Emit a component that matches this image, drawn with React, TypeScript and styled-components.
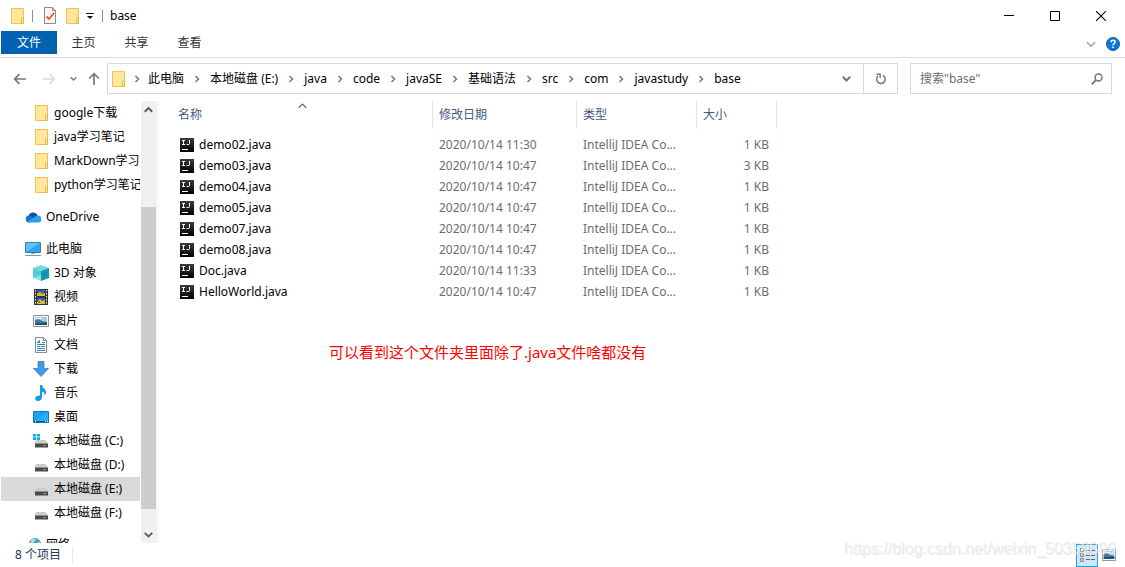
import React from 'react';
import styled, { createGlobalStyle } from 'styled-components';

const GlobalStyle = createGlobalStyle`
  * { box-sizing: border-box; }
  body {
    margin: 0;
    background: #fff;
    color: #000;
    font: 12px/16px "Noto Sans", "Noto Sans CJK SC", sans-serif;
  }
  button, input { font: inherit; color: inherit; }
  button { border: 0; padding: 0; background: none; }
  a { color: inherit; text-decoration: none; }
  svg { display: block; flex: none; }
  ul, ol { list-style: none; margin: 0; padding: 0; }
`;

const Window = styled.div`
  position: relative;
  display: flex;
  flex-direction: column;
  height: 100vh;
  overflow: hidden;
`;

const TitleBar = styled.header`
  display: flex;
  align-items: center;
  height: 31px;
  padding-left: 10px;
`;

const QuickButton = styled.button<{ $width: number }>`
  display: flex;
  align-items: center;
  justify-content: center;
  width: ${(p) => p.$width}px;
  height: 22px;
`;

const Separator = styled.span<{ $space: number }>`
  width: 1px;
  height: 12px;
  margin: 0 ${(p) => p.$space}px;
  background: #8f8f8f;
`;

const Title = styled.h1`
  flex: 1;
  margin: 0;
  font-size: 12px;
  font-weight: 400;
`;

const CaptionButtons = styled.div`
  display: flex;
  padding-right: 1px;
`;

const CaptionButton = styled.button`
  display: flex;
  align-items: center;
  justify-content: center;
  width: 46px;
  height: 31px;
`;

const Ribbon = styled.nav`
  display: flex;
  height: 27px;
  padding-left: 1px;
  border-bottom: 1px solid #dadbdc;
`;

const RibbonTab = styled.button<{ $primary?: boolean }>`
  width: ${(p) => (p.$primary ? 56 : 53)}px;
  height: 23px;
  padding-top: 1px;
  color: ${(p) => (p.$primary ? '#fff' : '#333')};
  background: ${(p) => (p.$primary ? '#0063b1' : 'transparent')};
`;

const RibbonTools = styled.div`
  display: flex;
  align-items: center;
  gap: 10px;
  margin-left: auto;
  padding-right: 5px;
`;

const NavigationBar = styled.div`
  display: flex;
  align-items: center;
  padding: 5px 13px 6px 8px;
`;

const NavButton = styled.button<{ $width: number }>`
  display: flex;
  align-items: center;
  justify-content: center;
  width: ${(p) => p.$width}px;
  height: 24px;
`;

const HistoryButtons = styled.div`
  display: flex;
  align-items: center;
`;

const AddressBox = styled.div`
  display: flex;
  flex: 1;
  align-items: center;
  min-width: 0;
  height: 31px;
  padding-left: 3px;
  border: 1px solid #d9d9d9;
`;

const Crumbs = styled.ol`
  display: flex;
  flex: 1;
  min-width: 0;
  overflow: hidden;
`;

const CrumbArrow = styled.span`
  display: flex;
  justify-content: center;
  width: 26px;
`;

const Crumb = styled.li`
  display: flex;
  align-items: center;
  white-space: nowrap;
  &:first-child ${CrumbArrow} { width: 22px; }
`;

const AddressButton = styled.button<{ $divided?: boolean }>`
  display: flex;
  align-items: center;
  justify-content: center;
  width: 34px;
  height: 29px;
  border-left: ${(p) => (p.$divided ? '1px solid #d9d9d9' : '0')};
`;

const SearchBox = styled.label`
  display: flex;
  align-items: center;
  width: 202px;
  height: 31px;
  margin-left: 12px;
  padding: 0 8px 0 9px;
  border: 1px solid #d9d9d9;
`;

const SearchInput = styled.input`
  flex: 1;
  min-width: 0;
  padding: 0;
  border: 0;
  outline: 0;
  background: none;
  &::placeholder { color: #6d6d6d; opacity: 1; }
`;

const Main = styled.div`
  display: flex;
  flex: 1;
  min-height: 0;
  padding-top: 1px;
`;

const Sidebar = styled.aside`
  display: flex;
  width: 159px;
  border-right: 1px solid #f3f3f3;
`;

const Tree = styled.nav`
  width: 140px;
  padding: 0 0 0 1px;
  overflow: hidden;
`;

const TreeGroup = styled.ul`
  margin-bottom: 8px;
`;

const TreeLink = styled.a<{ $root?: boolean; $selected?: boolean }>`
  display: flex;
  align-items: center;
  gap: 5px;
  height: 24px;
  padding-left: ${(p) => (p.$root ? 24 : 32)}px;
  white-space: nowrap;
  background: ${(p) => (p.$selected ? '#d9d9d9' : 'transparent')};
`;

const ScrollTrack = styled.div`
  display: flex;
  flex-direction: column;
  width: 16px;
  margin-left: 1px;
  background: #f0f0f0;
`;

const ScrollButton = styled.button`
  display: flex;
  align-items: center;
  justify-content: center;
  width: 15px;
  height: 17px;
`;

const ScrollThumb = styled.div`
  flex: 1;
  margin: 89px 1px 17px 0;
  background: #cdcdcd;
`;

const Content = styled.main`
  flex: 1;
  min-width: 0;
  padding-left: 13px;
  overflow: hidden;
`;

const FileTable = styled.table`
  width: 605px;
  table-layout: fixed;
  border-collapse: separate;
  border-spacing: 0;
  td { padding: 0 8px 0 6px; height: 21px; color: #6d6d6d; white-space: nowrap; }
  td:last-child { text-align: right; }
  thead::after { content: ""; display: block; height: 5px; }
`;

const ColumnHead = styled.th`
  position: relative;
  height: 28px;
  padding: 0 6px;
  border-right: 1px solid #e5e5e5;
  color: #44597a;
  font-weight: 400;
  text-align: left;
`;

const SortMark = styled.span`
  position: absolute;
  top: 0;
  left: 50%;
  margin-left: -4px;
`;

const FileName = styled.a`
  display: flex;
  align-items: center;
  gap: 5px;
  padding-left: 2px;
  color: #000;
`;

const Note = styled.p`
  margin: 38px 0 0 157px;
  color: #f00;
  font-size: 15px;
  line-height: 24px;
`;

const StatusBar = styled.footer`
  display: flex;
  align-items: center;
  height: 24px;
  padding: 0 8px 0 15px;
  color: #1e395b;
`;

const ItemCount = styled.span`
  width: 58px;
  border-right: 1px solid #e8e8e8;
`;

const ViewButtons = styled.div`
  display: flex;
  align-items: center;
  gap: 3px;
  margin-left: auto;
`;

const ViewButton = styled.button<{ $active?: boolean }>`
  display: flex;
  align-items: center;
  justify-content: center;
  width: ${(p) => (p.$active ? 22 : 16)}px;
  height: 23px;
  border: ${(p) => (p.$active ? '1px solid #26a0da' : '0')};
  background: ${(p) => (p.$active ? '#cbe8f6' : 'transparent')};
`;

const Watermark = styled.span`
  position: absolute;
  right: 9px;
  bottom: 8px;
  color: rgba(240, 240, 240, 0.8);
  font: 16px/20px "Liberation Sans", sans-serif;
  text-shadow: 1px 1px 0 rgba(190, 190, 190, 0.35);
  pointer-events: none;
`;

const FolderIcon = () => (
  <svg width="15" height="18" viewBox="0 0 15 18">
    <path d="M1.5 1.5h12v15h-12z" fill="#ffe69b" stroke="#eec64f" />
    <path d="M11.5 16.5v-5l1-1h1v6z" fill="#ffe79c" stroke="#e4b93f" />
  </svg>
);

const CHEVRONS = { up: 'M0.7 6 4 2.7 7.3 6', down: 'M0.7 2.5 4 5.8 7.3 2.5', right: 'M2.5 1 5.5 4 2.5 7' };

type ChevronProps = { dir: keyof typeof CHEVRONS; size?: number; color?: string; weight?: number };

const Chevron = ({ dir, size = 8, color = '#666', weight = 1 }: ChevronProps) => (
  <svg width={size} height={size} viewBox="0 0 8 8">
    <path d={CHEVRONS[dir]} fill="none" stroke={color} strokeWidth={weight} />
  </svg>
);

const Arrow = ({ turn, color }: { turn: number; color: string }) => (
  <svg width="14" height="14" viewBox="0 0 14 14">
    <path d="M13 7H2M6.5 2.2 1.7 7l4.8 4.8" fill="none" stroke={color} strokeWidth="1.7" transform={`rotate(${turn} 7 7)`} />
  </svg>
);

const IdeaIcon = () => (
  <svg width="14" height="14" viewBox="0 0 14 14">
    <defs>
      <linearGradient id="idea" x1="0" y1="0" x2="0" y2="1">
        <stop offset="0" stopColor="#3c3c3c" />
        <stop offset="1" stopColor="#000" />
      </linearGradient>
    </defs>
    <path d="M0 0h14v14H0z" fill="url(#idea)" />
    <path d="M2 2.500h3M3.500 2.500v4M2 6.500h3M9.500 2v3.500q0 1-1 1H6.500" fill="none" stroke="#fff" />
    <path d="M2 11.500h6" stroke="#fff" />
  </svg>
);

const Cloud = () => (
  <svg width="16" height="16" viewBox="0 0 16 16">
    <path d="M3.500 7.500a4.800 4.800 0 0 1 9-1.500l-3 4z" fill="#0a4fa3" />
    <path d="M3.500 13.500A3.500 3.500 0 0 1 3.800 6.600q1.700-.1 3 .9l4 5z" fill="#1478d4" />
    <path d="M2 13 10.500 7.200q1.500-1.200 3-.6a3.500 3.500 0 0 1 .3 6.900H3.500z" fill="#28a2ea" />
  </svg>
);

const Monitor = () => (
  <svg width="16" height="16" viewBox="0 0 16 16">
    <path d="M.5 1.500h15v10H.5z" fill="#5cc3fb" stroke="#48799b" />
    <path d="M1 11 15 2v9z" fill="#2ea4f2" />
    <path d="M6 12h4v1H6z" fill="#8cabc0" />
    <path d="M0 14.500h16" stroke="#8296a8" />
  </svg>
);

const Cube = () => (
  <svg width="16" height="16" viewBox="0 0 16 16">
    <path d="M0 3 8 0l8 3-8 3z" fill="#6fdbe4" />
    <path d="M0 3l8 3v10l-8-3z" fill="#8be4ec" />
    <path d="M16 3 8 6v10l8-3z" fill="#1595b0" />
    <path d="M0 3l8 3v4l-8 3z" fill="#35b9cd" opacity=".6" />
  </svg>
);

const Film = () => (
  <svg width="16" height="16" viewBox="0 0 16 16">
    <path d="M1 0h14v16H1z" fill="#343434" />
    <path d="M2.500 1v15M13.500 1v15" stroke="#eee" strokeDasharray="1.500 1.500" />
    <path d="M4 1h8v6H4zM4 9h8v6H4z" fill="#315fb5" />
    <path d="M4 5l3-2 2 2 3-1v3H4zM4 13l3-3 2 2 3-1v4H4z" fill="#e1b63d" />
    <path d="M8 3h3v2H8zM5 12h2v2H5z" fill="#5d9147" />
  </svg>
);

const Photo = ({ width = 16 }: { width?: number }) => (
  <svg width={width} height="12" viewBox="0 0 16 12" preserveAspectRatio="none">
    <path d="M.5.5h15v11H.5z" fill="#fff" stroke="#919191" />
    <path d="M2 2h12v8H2z" fill="#9dcdf4" />
    <path d="M2 5q4-2 7 1l5 1v3H2z" fill="#417b99" />
    <path d="M2 8q5 1 12-1v3H2z" fill="#214c74" />
    <path d="M3 3.500h6" stroke="#fff" />
  </svg>
);

const Doc = () => (
  <svg width="16" height="16" viewBox="0 0 16 16">
    <path d="M2.500.5h8l3 3v12h-11z" fill="#fff" stroke="#8b8b8b" />
    <path d="M10.500.5v3h3" fill="none" stroke="#8b8b8b" />
    <path d="M4 5.500h3M9 5.500h3M4 7.500h8M4 9.500h3M8 9.500h4M4 11.500h8M4 13.500h8" stroke="#3c86b5" />
    <path d="M4 5l3-2v3H4z" fill="#1990cf" />
  </svg>
);

const Download = () => (
  <svg width="16" height="16" viewBox="0 0 16 16">
    <path d="M5 .5h6v7h4.500L8 15.500.5 7.500H5z" fill="#3f9ae8" stroke="#2878c4" strokeWidth=".7" />
  </svg>
);

const Music = () => (
  <svg width="16" height="16" viewBox="0 0 16 16">
    <path d="M7 0h2q.3 2.500 2.800 4.300Q14.500 7 11.500 11q.8-3.500-2.500-4.500V12q0 3.500-3.800 4-3 0-3-2.200.3-3.300 4.800-3.300z" fill="#109be8" />
  </svg>
);

const Desktop = () => (
  <svg width="16" height="12" viewBox="0 0 16 12">
    <path d="M.5.5h15v11H.5z" fill="#16a2f7" stroke="#1476b8" />
    <path d="M1 10 15 1v9z" fill="#2caefb" />
    <path d="M1 10.500h14" stroke="#074d83" />
    <path d="M2 10.500h1M12 10.500h1M14 10.500h1" stroke="#fff" />
  </svg>
);

const Disk = ({ system }: { system?: boolean }) => (
  <svg width="16" height="16" viewBox="0 0 16 16">
    <path d="M3.500 7h9L15 10.500H1z" fill="#ccc" />
    <path d="M2 10h13v4.500H2z" fill="#4b4b4b" />
    <path d="M2 10.500h13" stroke="#8d8d8d" />
    <path d="M10.500 12.500h2" stroke="#4cf35b" />
    {system && <path d="M0 1h3v2.500H0zM3.800 1H7v2.500H3.800zM0 4.300h3V7H0zM3.800 4.300H7V7H3.800z" fill="#00aef0" />}
  </svg>
);

const Network = () => (
  <svg width="16" height="16" viewBox="0 0 16 16">
    <circle cx="10" cy="7" r="6" fill="#4c9cc9" />
    <path d="M6 3q3-2 5-1L9 5 6 7zM11 6l4-1v4l-3 2z" fill="#b6ddeb" />
    <path d="M0 7h8v6H0z" fill="#3d9ddb" />
  </svg>
);

type Node = { label: string; icon: React.ReactNode; root?: boolean; selected?: boolean };

const TREE: Node[][] = [
  ['google下载', 'java学习笔记', 'MarkDown学习', 'python学习笔记'].map((label) => ({ label, icon: <FolderIcon /> })),
  [{ label: 'OneDrive', icon: <Cloud />, root: true }],
  [
    { label: '此电脑', icon: <Monitor />, root: true },
    { label: '3D 对象', icon: <Cube /> },
    { label: '视频', icon: <Film /> },
    { label: '图片', icon: <Photo /> },
    { label: '文档', icon: <Doc /> },
    { label: '下载', icon: <Download /> },
    { label: '音乐', icon: <Music /> },
    { label: '桌面', icon: <Desktop /> },
    { label: '本地磁盘 (C:)', icon: <Disk system /> },
    { label: '本地磁盘 (D:)', icon: <Disk /> },
    { label: '本地磁盘 (E:)', icon: <Disk />, selected: true },
    { label: '本地磁盘 (F:)', icon: <Disk /> },
  ],
  [{ label: '网络', icon: <Network />, root: true }],
];

const IconSlot = styled.span`
  display: flex;
  justify-content: center;
  flex: none;
  width: 16px;
`;

const PATH = ['此电脑', '本地磁盘 (E:)', 'java', 'code', 'javaSE', '基础语法', 'src', 'com', 'javastudy', 'base'];

const FILES = [
  ['demo02.java', '2020/10/14 11:30', '1 KB'],
  ['demo03.java', '2020/10/14 10:47', '3 KB'],
  ['demo04.java', '2020/10/14 10:47', '1 KB'],
  ['demo05.java', '2020/10/14 10:47', '1 KB'],
  ['demo07.java', '2020/10/14 10:47', '1 KB'],
  ['demo08.java', '2020/10/14 10:47', '1 KB'],
  ['Doc.java', '2020/10/14 11:33', '1 KB'],
  ['HelloWorld.java', '2020/10/14 10:47', '1 KB'],
];

export default function App() {
  return (
    <Window>
      <GlobalStyle />
      <TitleBar>
        <FolderIcon />
        <Separator $space={7} />
        <QuickButton $width={20} aria-label="属性">
          <svg width="14" height="17" viewBox="0 0 14 17">
            <path d="M1.500.5h8l3 3v13h-11z" fill="#f7f7f7" stroke="#8c8c8c" />
            <path d="M9.500.5v3h3" fill="none" stroke="#8c8c8c" />
            <path d="M3.500 9.500 6 12l5-6" fill="none" stroke="#e8591c" strokeWidth="1.800" />
          </svg>
        </QuickButton>
        <QuickButton $width={25} aria-label="新建文件夹"><FolderIcon /></QuickButton>
        <QuickButton $width={10} aria-label="自定义快速访问工具栏">
          <svg width="8" height="8" viewBox="0 0 8 8">
            <path d="M0 1.500h8" stroke="#222" />
            <path d="M1 4h6L4 7z" fill="#111" />
          </svg>
        </QuickButton>
        <Separator $space={7} />
        <Title>base</Title>
        <CaptionButtons>
          <CaptionButton aria-label="最小化">
            <svg width="10" height="10" viewBox="0 0 10 10"><path d="M0 4.500h10" stroke="#000" /></svg>
          </CaptionButton>
          <CaptionButton aria-label="最大化">
            <svg width="10" height="10" viewBox="0 0 10 10"><path d="M.5.5h9v9h-9z" fill="none" stroke="#000" /></svg>
          </CaptionButton>
          <CaptionButton aria-label="关闭">
            <svg width="10" height="10" viewBox="0 0 10 10"><path d="M0 0l10 10M10 0 0 10" stroke="#000" strokeWidth="1.100" /></svg>
          </CaptionButton>
        </CaptionButtons>
      </TitleBar>

      <Ribbon>
        <RibbonTab $primary>文件</RibbonTab>
        <RibbonTab>主页</RibbonTab>
        <RibbonTab>共享</RibbonTab>
        <RibbonTab>查看</RibbonTab>
        <RibbonTools>
          <button aria-label="展开功能区"><Chevron dir="down" size={10} color="#999" /></button>
          <button aria-label="帮助">
            <svg width="14" height="14" viewBox="0 0 14 14">
              <circle cx="7" cy="7" r="6.500" fill="#0a78d4" stroke="#0561ad" />
              <path d="M5 5.300q0-2 2-2t2 1.700q0 1-1 1.600T7 8.300" fill="none" stroke="#fff" strokeWidth="1.500" />
              <path d="M6.200 9.500h1.600v1.500H6.200z" fill="#fff" />
            </svg>
          </button>
        </RibbonTools>
      </Ribbon>

      <NavigationBar>
        <HistoryButtons>
          <NavButton $width={24} aria-label="后退"><Arrow turn={0} color="#777" /></NavButton>
          <NavButton $width={34} aria-label="前进"><Arrow turn={180} color="#dcdcdc" /></NavButton>
          <NavButton $width={14} aria-label="最近浏览的位置"><Chevron dir="down" size={7} color="#777" weight={1.5} /></NavButton>
          <NavButton $width={27} aria-label="上移"><Arrow turn={90} color="#777" /></NavButton>
        </HistoryButtons>
        <AddressBox>
          <FolderIcon />
          <Crumbs>
            {PATH.map((part) => (
              <Crumb key={part}>
                <CrumbArrow><Chevron dir="right" color="#777" weight={1.5} /></CrumbArrow>
                <a href="#">{part}</a>
              </Crumb>
            ))}
          </Crumbs>
          <AddressButton aria-label="以前的位置"><Chevron dir="down" size={9} color="#777" weight={1.8} /></AddressButton>
          <AddressButton $divided aria-label="刷新">
            <svg width="12" height="12" viewBox="0 0 12 12">
              <path d="M7.800 2.300A4.300 4.300 0 1 1 3 3" fill="none" stroke="#777" strokeWidth="1.500" />
              <path d="M1.500 1.300h3.700V5" fill="none" stroke="#777" strokeWidth="1.400" />
            </svg>
          </AddressButton>
        </AddressBox>
        <SearchBox>
          <SearchInput type="search" aria-label="搜索" placeholder={'搜索"base"'} />
          <svg width="12" height="12" viewBox="0 0 12 12">
            <circle cx="7.500" cy="4.500" r="3.500" fill="none" stroke="#777" strokeWidth="1.500" />
            <path d="M5 7 .7 11.300" stroke="#777" strokeWidth="1.800" />
          </svg>
        </SearchBox>
      </NavigationBar>

      <Main>
        <Sidebar>
          <Tree>
            {TREE.map((group, i) => (
              <TreeGroup key={i}>
                {group.map((node) => (
                  <li key={node.label}>
                    <TreeLink href="#" $root={node.root} $selected={node.selected}>
                      <IconSlot>{node.icon}</IconSlot>
                      {node.label}
                    </TreeLink>
                  </li>
                ))}
              </TreeGroup>
            ))}
          </Tree>
          <ScrollTrack>
            <ScrollButton aria-label="向上滚动"><Chevron dir="up" size={9} color="#555" weight={1.6} /></ScrollButton>
            <ScrollThumb />
            <ScrollButton aria-label="向下滚动"><Chevron dir="down" size={9} color="#555" weight={1.6} /></ScrollButton>
          </ScrollTrack>
        </Sidebar>
        <Content>
          <FileTable>
            <colgroup>
              <col width="261" />
              <col width="144" />
              <col width="120" />
              <col width="80" />
            </colgroup>
            <thead>
              <tr>
                <ColumnHead>名称<SortMark><Chevron dir="up" size={9} color="#666" /></SortMark></ColumnHead>
                <ColumnHead>修改日期</ColumnHead>
                <ColumnHead>类型</ColumnHead>
                <ColumnHead>大小</ColumnHead>
              </tr>
            </thead>
            <tbody>
              {FILES.map(([name, date, size]) => (
                <tr key={name}>
                  <td><FileName href="#"><IdeaIcon />{name}</FileName></td>
                  <td>{date}</td>
                  <td>IntelliJ IDEA Co...</td>
                  <td>{size}</td>
                </tr>
              ))}
            </tbody>
          </FileTable>
          <Note>可以看到这个文件夹里面除了.java文件啥都没有</Note>
        </Content>
      </Main>

      <StatusBar>
        <ItemCount>8 个项目</ItemCount>
        <ViewButtons>
          <ViewButton $active aria-label="详细信息">
            <svg width="17" height="15" viewBox="0 0 17 15">
              <path d="M1.500.5h3v3h-3zM1.500 5.500h3v3h-3zM1.500 10.500h3v3h-3z" fill="#fff" stroke="#888" />
              <path d="M7 2.500h4M12 2.500h4M7 7.500h4M12 7.500h4M7 11.500h4M12 11.500h4" stroke="#666" />
              <path d="M2.500 7h1M2.500 12h1" stroke="#c33" />
            </svg>
          </ViewButton>
          <ViewButton aria-label="大缩略图"><Photo width={14} /></ViewButton>
        </ViewButtons>
      </StatusBar>
      <Watermark>https://blog.csdn.net/weixin_50359899</Watermark>
    </Window>
  );
}
